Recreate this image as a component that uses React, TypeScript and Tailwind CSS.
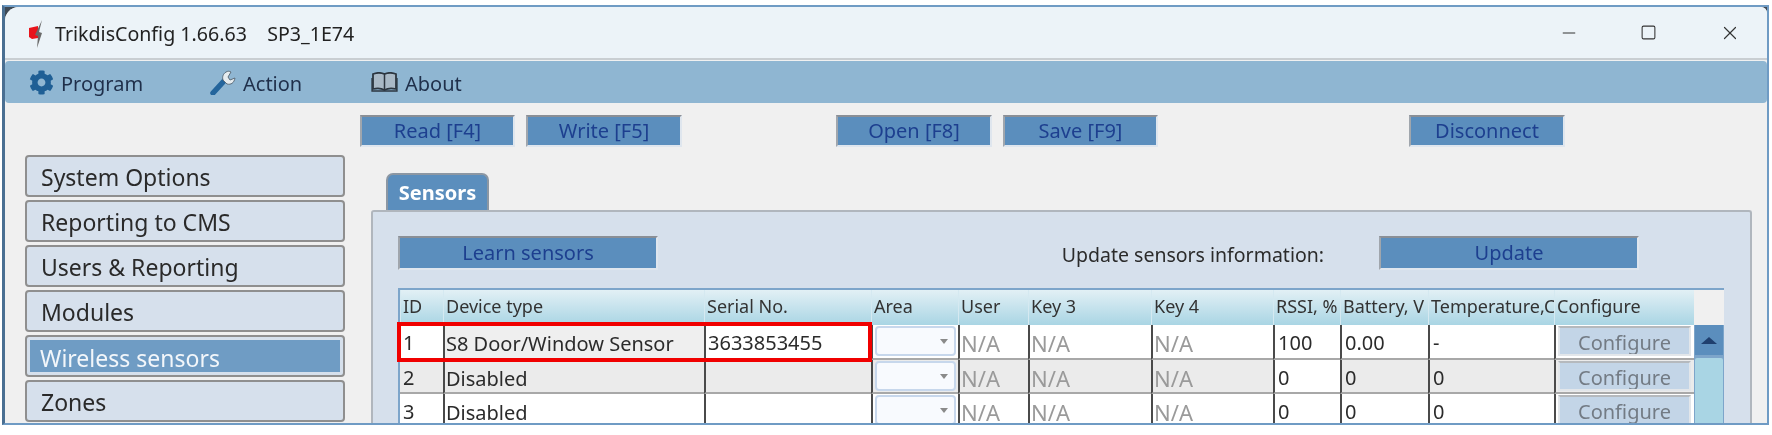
import { Minus, Square, X } from "lucide-react";
import { FaCog } from "react-icons/fa";

const navItems = ["System Options", "Reporting to CMS", "Users & Reporting", "Modules", "Wireless sensors", "Zones"];
const headers = ["ID", "Device type", "Serial No.", "Area", "User", "Key 3", "Key 4", "RSSI, %", "Battery, V", "Temperature,C", "Configure"];
const rows = [
  { id: "1", type: "S8 Door/Window Sensor", serial: "3633853455", rssi: "100", bat: "0.00", temp: "-", tint: false, rowH: "h-[35px]" },
  { id: "2", type: "Disabled", serial: "", rssi: "0", bat: "0", temp: "0", tint: true, rowH: "h-[34px]" },
  { id: "3", type: "Disabled", serial: "", rssi: "0", bat: "0", temp: "0", tint: false, rowH: "h-[34px]" },
];

function ToolButton({ label, className }: { label: string; className: string }) {
  return (
    <button className={`h-[32px] bg-[#5b8ebd] border-2 border-[#dfe6ee] border-t-[#8a8f96] border-l-[#a0a6ad] text-[#1d3f8f] text-[20px] leading-[26px] ${className}`}>
      {label}
    </button>
  );
}

function Cell({ children, bg, pad = "pl-[3px] pt-[3px] text-[20px] leading-[29px]" }: { children?: React.ReactNode; bg: string; pad?: string }) {
  return (
    <div className={`${bg} border-l-2 border-[#4a4a4a] border-b-2 border-b-[#a8a8a8] ${pad} text-[#2b2b2b] whitespace-nowrap overflow-hidden`}>
      {children}
    </div>
  );
}

export default function App() {
  return (
    <div className="w-[1772px] h-[435px] bg-white pt-[5px] pl-[2px] overflow-hidden font-['Noto_Sans',sans-serif] blur-[0.5px]">
      <div className="w-[1767px] h-[420px] bg-[#3f4a55] border-t-2 border-r-2 border-b-2 border-[#6f9bc4] border-l-[3px] border-l-[#4a6f92] overflow-hidden">
        <div className="h-full bg-[#f0f0f0] rounded-tl-[14px] rounded-tr-[6px] overflow-hidden flex flex-col">
          {/* Title bar */}
          <div className="h-[53px] shrink-0 bg-[#ecf3f8] border-b-2 border-[#c9ced2] flex items-center pl-[23px]">
            <svg width="18" height="28" viewBox="0 0 18 28" className="mr-[9px] mt-[2px]">
              <path d="M1 8l9-2v12l-6 1-3-2z" fill="#e8141c" />
              <path d="M14 0L11 12l3 1-5 15 1-12-3-1z" fill="#6a6a6a" />
            </svg>
            <span className="text-[19.6px] pt-[2px] text-[#222] whitespace-pre">TrikdisConfig 1.66.63    SP3_1E74</span>
            <div className="ml-auto flex items-center text-[#333]">
              <Minus size={20} strokeWidth={1.2} className="mr-[61px]" />
              <Square size={17} strokeWidth={1.5} className="mr-[62px]" />
              <X size={22} strokeWidth={1.3} className="mr-[26px]" />
            </div>
          </div>

          {/* Menu bar */}
          <div className="h-[42px] shrink-0 bg-[#8fb6d2] rounded-[4px] mt-[1px] flex items-center pl-[24px] text-[20px] text-[#1f2f4a]">
            <FaCog size={25} className="text-[#1f5f95]" />
            <span className="ml-[7px] w-[149px] pt-[3px]">Program</span>
            <svg width="27" height="25" viewBox="0 0 27 25">
              <path d="M3 23L14 11" stroke="#24659c" strokeWidth="5.5" strokeLinecap="round" />
              <path d="M16 2c-3 2-4 5-3 8l4 4c4 1 7-1 8-6l-5 2-2-3 3-5c-2-1-3-1-5 0z" fill="#e6ecef" stroke="#5d6d7a" strokeWidth="1" />
            </svg>
            <span className="ml-[6px] w-[128px] pt-[3px]">Action</span>
            <svg width="27" height="20" viewBox="0 0 27 20">
              <path d="M2 2c4-1.500 8-1.500 11.500 0 3.500-1.500 7.500-1.500 11.500 0v15c-4-1-8-1-11.500 1-3.500-2-7.500-2-11.500-1z" fill="#a9b9c6" stroke="#2c3640" strokeWidth="1.800" />
              <path d="M13.500 2v16" stroke="#2c3640" strokeWidth="1.500" />
              <path d="M1 6v13h25V6" fill="none" stroke="#2c3640" strokeWidth="1.300" />
            </svg>
            <span className="ml-[7px] pt-[3px]">About</span>
          </div>

          {/* Toolbar */}
          <div className="shrink-0 mt-[12px] pl-[355px] flex">
            <ToolButton label="Read [F4]" className="w-[155px]" />
            <ToolButton label="Write [F5]" className="w-[156px] ml-[11px]" />
            <ToolButton label="Open [F8]" className="w-[156px] ml-[154px]" />
            <ToolButton label="Save [F9]" className="w-[155px] ml-[11px]" />
            <ToolButton label="Disconnect" className="w-[156px] ml-[251px]" />
          </div>

          {/* Body */}
          <div className="flex mt-[8px] pl-[20px] flex-1 min-h-0">
            <div className="w-[320px] shrink-0 flex flex-col gap-[3px]">
              {navItems.map((n) => (
                <div
                  key={n}
                  className={
                    n === "Wireless sensors"
                      ? "h-[42px] shrink-0 bg-[#d6e0ec] border-2 border-[#8f8f8f] rounded-[4px] p-[3px] flex"
                      : "h-[42px] shrink-0 bg-[#d6e0ec] border-2 border-[#8f8f8f] rounded-[4px] flex items-center pl-[14px] pt-[3px] text-[23px] text-[#2a2a2a]"
                  }
                >
                  {n === "Wireless sensors" ? (
                    <div className="flex-1 bg-[#6f9cc4] pl-[10px] text-[23px] leading-[36px] text-[#f2f6fa]">{n}</div>
                  ) : (
                    n
                  )}
                </div>
              ))}
            </div>

            <div className="ml-[26px] flex-1 min-w-0 pr-[15px] flex flex-col">
              <div className="mt-[18px] ml-[15px] w-[103px] h-[37px] shrink-0 bg-[#5b8ebd] border-t-2 border-l-2 border-r-2 border-[#8c97a3] rounded-t-[7px] flex items-center justify-center text-white font-bold text-[20px]">
                Sensors
              </div>
              <div className="flex-1 bg-[#d6e0ec] border-t-2 border-l-2 border-r-2 border-[#b0b6bd] rounded-t-[3px] pl-[25px] pr-[25px] pt-[24px]">
                <div className="flex items-center w-[1241px]">
                  <ToolButton label="Learn sensors" className="!h-[34px] w-[260px]" />
                  <span className="ml-auto text-[19.5px] text-[#2b2b2b] pt-[3px]">Update sensors information:</span>
                  <ToolButton label="Update" className="!h-[34px] w-[260px] ml-[55px]" />
                </div>

                {/* Table */}
                <div className="mt-[18px] w-[1326px] border-t-2 border-l-2 border-r-2 border-[#7da5ca] grid grid-cols-[43px_261px_167px_87px_70px_123px_122px_67px_88px_126px_140px_30px]">
                  {headers.map((h) => (
                    <div
                      key={h}
                      className="h-[35px] bg-gradient-to-b from-[#e2f0f5] to-[#a9d5e4] border-l border-[#d5e9f1] pl-[2px] pt-[2px] text-[18px] leading-[28px] text-[#333] whitespace-nowrap overflow-hidden"
                    >
                      {h}
                    </div>
                  ))}
                  <div className="bg-[#f0f0f0]" />
                  {rows.map((r, i) => {
                    const tint = r.tint ? "bg-[#ebebeb]" : "bg-white";
                    const wide = "pl-[1px] pt-[5px] text-[20px] leading-[27px]";
                    const na = "pl-[1px] pt-[5px] text-[22px] leading-[27px]";
                    return (
                      <div key={r.id} className="contents">
                        <div className={`${r.rowH} ${tint} border-b-2 border-b-[#a8a8a8] pl-[3px] pt-[3px] text-[20px] leading-[29px] text-[#2b2b2b]`}>{r.id}</div>
                        <Cell bg={i === 0 ? "bg-[#efefef]" : tint} pad={wide}>{r.type}</Cell>
                        <Cell bg={i === 0 ? "bg-white" : tint} pad="pl-[2px] pt-[3px] text-[20px] leading-[29px]">{r.serial}</Cell>
                        <div className={`${tint} border-l-2 border-[#4a4a4a] border-b-2 border-b-[#a8a8a8] px-[2px] pt-[1px]`}>
                          <div className="h-[30px] bg-[#f8fafe] border-2 border-[#c7d7ec] rounded-[4px] flex items-center justify-end pr-[6px]">
                            <div className="w-0 h-0 border-l-[4px] border-r-[4px] border-t-[5px] border-l-transparent border-r-transparent border-t-[#8a8a8a]" />
                          </div>
                        </div>
                        <Cell bg={tint} pad={na}><span className="text-[#9a9a9a]">N/A</span></Cell>
                        <Cell bg={tint} pad={na}><span className="text-[#9a9a9a]">N/A</span></Cell>
                        <Cell bg={tint} pad={na}><span className="text-[#9a9a9a]">N/A</span></Cell>
                        <Cell bg="bg-white">{r.rssi}</Cell>
                        <Cell bg={tint}>{r.bat}</Cell>
                        <Cell bg={tint}>{r.temp}</Cell>
                        <div className={`${tint} border-l-2 border-[#4a4a4a] border-b-2 border-b-[#a8a8a8] pl-[2px] pr-[3px] pt-[1px]`}>
                          <div className="h-[30px] bg-[#c3d5e7] border-2 border-[#e2e6ea] border-t-[#b5b9bd] text-center text-[20px] leading-[30px] text-[#737b84] overflow-hidden">
                            Configure
                          </div>
                        </div>
                        {i === 0 ? (
                          <div className="row-span-3 flex flex-col bg-[#7da5ca] px-[1px]">
                            <div className="h-[30px] bg-[#5b8ebd] flex items-center justify-center">
                              <div className="w-0 h-0 border-l-[8px] border-r-[8px] border-b-[7px] border-l-transparent border-r-transparent border-b-[#1f3f6e]" />
                            </div>
                            <div className="mt-[3px] flex-1 bg-[#a9d5e4] rounded-t-[2px]" />
                          </div>
                        ) : null}
                      </div>
                    );
                  })}
                </div>
              </div>
            </div>
          </div>
        </div>
      </div>
      {/* Highlight box over the first table row */}
      <div className="absolute left-[397px] top-[322px] w-[475px] h-[40px] border-[4px] border-[#f00000]" />
    </div>
  );
}
